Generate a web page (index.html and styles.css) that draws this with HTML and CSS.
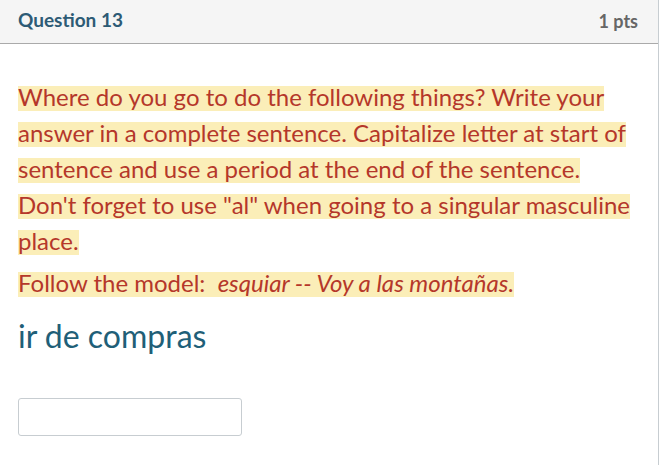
FILE: index.html
```html
<!DOCTYPE html>
<html>
<head>
<meta charset="utf-8">
<link rel="stylesheet" href="styles.css">
</head>
<body>
<div class="question">
  <div class="header">
    <span class="title">Question 13</span>
    <span class="pts">1 pts</span>
  </div>
  <div class="content">
    <p class="instr"><span class="hl">Where do you go to do the following things? Write your answer in a complete sentence. Capitalize letter at start of sentence and use a period at the end of the sentence. Don't forget to use "al" when going to a singular masculine place.</span></p>
    <p class="instr model"><span class="hl">Follow the model:&nbsp; <em>esquiar -- Voy a las montañas.</em></span></p>
    <h3 class="prompt">ir de compras</h3>
    <input class="answer" type="text">
  </div>
</div>
</body>
</html>
```
FILE: styles.css
```css
html, body {
  margin: 0;
  padding: 0;
  background: #fff;
}
body {
  font-family: Lato, "Noto Sans", sans-serif;
}
.question {
  width: 658px;
  height: 465px;
  border-right: 1px solid #c7cdd1;
}
.header {
  height: 43px;
  background: #f5f5f5;
  border-bottom: 1px solid #aaaaaa;
  display: flex;
  align-items: center;
  justify-content: space-between;
  padding: 0 20px 0 18px;
  box-sizing: content-box;
}
.title {
  font-size: 19px;
  font-weight: 700;
  color: #2d5b75;
  margin-top: -4px;
}
.pts {
  font-size: 18px;
  font-weight: 700;
  color: #666;
  margin-top: -1px;
}
.content {
  padding: 35px 18px 0 18px;
}
.instr {
  margin: 0;
  font-size: 24px;
  line-height: 36px;
  color: #b5372a;
}
.model {
  margin-top: 6px;
}
.hl {
  background: linear-gradient(to bottom, transparent 0, transparent 4px, #fbeeb8 4px, #fbeeb8 100%);
  -webkit-box-decoration-break: clone;
  box-decoration-break: clone;
}
.instr em {
  font-style: italic;
}
.prompt {
  margin: 15px 0 0 0;
  font-size: 32px;
  font-weight: 400;
  line-height: 40px;
  color: #1f5f78;
}
.answer {
  display: block;
  margin-top: 42px;
  width: 224px;
  height: 38px;
  box-sizing: border-box;
  border: 1px solid #c7cdd1;
  border-radius: 3px;
  background: #fff;
}
```
